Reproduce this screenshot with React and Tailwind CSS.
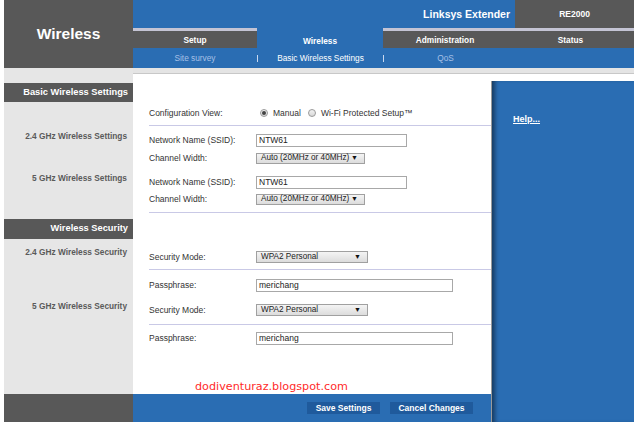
const BLUE = "bg-[#2a6db3]";

function Input({ w, value }) {
  return (
    <div
      className="h-full border border-[#a8a8a8] bg-white flex items-center pl-[2px] text-[8.5px] text-[#222]"
      style={{ width: w }}
    >
      {value}
    </div>
  );
}

function Select({ w, value }) {
  return (
    <div
      className="h-full border border-[#a0a0a0] bg-gradient-to-b from-[#f4f4f4] to-[#dcdcdc] flex items-center justify-between pl-[4px] pr-[6px] text-[8.2px] text-[#222]"
      style={{ width: w }}
    >
      <span>{value}</span>
      <span className="text-[7px] text-[#111]">▼</span>
    </div>
  );
}

function Row({ label, children, cls }) {
  return (
    <div className={"shrink-0 flex items-center pl-[16px] " + cls}>
      <div className="w-[107px] text-[8.5px] text-[#333] leading-none">{label}</div>
      <div className="h-full flex items-center">{children}</div>
    </div>
  );
}

function Line({ cls }) {
  return <div className={"shrink-0 ml-[16px] h-px bg-[#c9c9e6] " + cls} />;
}

function Radio({ on }) {
  return (
    <div className="w-[8px] h-[8px] rounded-full border border-[#9a9a9a] bg-gradient-to-b from-[#f2f2f2] to-[#d8d8d8] flex items-center justify-center">
      {on && <div className="w-[4px] h-[4px] rounded-full bg-[#444]" />}
    </div>
  );
}

export default function App() {
  return (
    <div className="w-[640px] h-[424px] bg-white pl-[4px] overflow-hidden font-['Liberation_Sans',Arial,sans-serif]">
      {/* Header */}
      <div className="w-[630px] h-[68px] flex">
        <div className="w-[129px] bg-[#585858] flex items-center justify-center text-white font-bold text-[15.5px]">
          Wireless
        </div>
        <div className="flex-1 flex flex-col">
          <div className="h-[28px] flex">
            <div className={"flex-1 flex items-center justify-end pr-[5px] pt-[1px] text-white font-bold text-[10.5px] " + BLUE}>
              Linksys Extender
            </div>
            <div className="w-[119px] bg-[#585858] flex items-center justify-center text-white font-bold text-[8.5px]">
              RE2000
            </div>
          </div>
          <div className="h-[20px] flex text-white font-bold text-[8.3px]">
            <div className="w-[124px] bg-[#585858] border-t-[3px] border-[#c4c4d4] flex items-center justify-center pt-[1px]">
              Setup
            </div>
            <div className={"w-[126px] flex items-center justify-center pt-[6px] " + BLUE}>Wireless</div>
            <div className="w-[124px] bg-[#585858] border-t-[3px] border-[#c4c4d4] flex items-center justify-center pt-[1px]">
              Administration
            </div>
            <div className="w-[127px] bg-[#585858] border-t-[3px] border-[#c4c4d4] flex items-center justify-center pt-[1px]">
              Status
            </div>
          </div>
          <div className={"h-[20px] flex items-center text-[8.3px] " + BLUE}>
            <div className="w-[124px] text-center text-[#a6c0e6]">Site survey</div>
            <div className="w-px h-[7px] bg-[#c8d8f0]" />
            <div className="w-[125px] text-center text-white">Basic Wireless Settings</div>
            <div className="w-px h-[7px] bg-[#c8d8f0]" />
            <div className="w-[123px] text-center text-[#a6c0e6]">QoS</div>
          </div>
        </div>
      </div>

      {/* Body */}
      <div className="flex">
        <div className="w-[487px] flex flex-col">
          <div className="h-[326px] flex">
            {/* Sidebar */}
            <div className="w-[129px] bg-[#e6e6e6] flex flex-col">
              <div className="mt-[15px] h-[19px] bg-[#585858] flex items-center justify-end pr-[5px] text-white font-bold text-[9.3px]">
                Basic Wireless Settings
              </div>
              <div className="mt-[29px] h-[10px] flex items-center justify-end pr-[6px] text-[#5a5a5a] font-bold text-[8.3px]">
                2.4 GHz Wireless Settings
              </div>
              <div className="mt-[32px] h-[10px] flex items-center justify-end pr-[6px] text-[#5a5a5a] font-bold text-[8.3px]">
                5 GHz Wireless Settings
              </div>
              <div className="mt-[36px] h-[20px] bg-[#585858] flex items-center justify-end pr-[5px] text-white font-bold text-[9.3px]">
                Wireless Security
              </div>
              <div className="mt-[8px] h-[10px] flex items-center justify-end pr-[6px] text-[#5a5a5a] font-bold text-[8.3px]">
                2.4 GHz Wireless Security
              </div>
              <div className="mt-[44px] h-[10px] flex items-center justify-end pr-[6px] text-[#5a5a5a] font-bold text-[8.3px]">
                5 GHz Wireless Security
              </div>
            </div>
            {/* Main */}
            <div className="w-[358px] flex flex-col">
              <div className="shrink-0 h-[6px] bg-[#e4e4e4] border-b border-[#c8c8c8]" />
              <div className="flex-1 bg-white flex flex-col overflow-hidden">
                <Row label="Configuration View:" cls="mt-[32px] h-[14px]">
                  <div className="ml-[4px] flex items-center text-[8.5px] text-[#333]">
                    <Radio on />
                    <span className="ml-[5px]">Manual</span>
                    <span className="ml-[7px]"><Radio /></span>
                    <span className="ml-[5px]">Wi-Fi Protected Setup™</span>
                  </div>
                </Row>
                <Line cls="mt-[5px]" />
                <Row label="Network Name (SSID):" cls="mt-[8px] h-[13px]">
                  <Input w={151} value="NTW61" />
                </Row>
                <Row label="Channel Width:" cls="mt-[6px] h-[11px]">
                  <Select w={109} value="Auto (20MHz or 40MHz)" />
                </Row>
                <Row label="Network Name (SSID):" cls="mt-[12px] h-[13px]">
                  <Input w={151} value="NTW61" />
                </Row>
                <Row label="Channel Width:" cls="mt-[5px] h-[11px]">
                  <Select w={109} value="Auto (20MHz or 40MHz)" />
                </Row>
                <Line cls="mt-[7px]" />
                <Row label="Security Mode:" cls="mt-[38px] h-[12px]">
                  <Select w={112} value="WPA2 Personal" />
                </Row>
                <Line cls="mt-[6px]" />
                <Row label="Passphrase:" cls="mt-[9px] h-[13px]">
                  <Input w={197} value="merichang" />
                </Row>
                <Row label="Security Mode:" cls="mt-[12px] h-[12px]">
                  <Select w={112} value="WPA2 Personal" />
                </Row>
                <Line cls="mt-[8px]" />
                <Row label="Passphrase:" cls="mt-[7px] h-[13px]">
                  <Input w={197} value="merichang" />
                </Row>
                <div className="shrink-0 mt-[36px] ml-[62px] h-[12px] leading-[12px] text-[11.2px] text-[#ff2a2a] font-['DejaVu_Sans',sans-serif]">
                  dodiventuraz.blogspot.com
                </div>
              </div>
            </div>
          </div>
          {/* Footer */}
          <div className="h-[28px] flex">
            <div className="w-[129px] bg-[#585858]" />
            <div className={"flex-1 flex justify-end items-start pt-[8px] pr-[18px] gap-[10px] " + BLUE}>
              <div className="w-[73px] h-[12px] bg-[#1f5a9c] flex items-center justify-center text-white font-bold text-[8.5px]">
                Save Settings
              </div>
              <div className="w-[83px] h-[12px] bg-[#1f5a9c] flex items-center justify-center text-white font-bold text-[8.5px]">
                Cancel Changes
              </div>
            </div>
          </div>
        </div>
        {/* Right help column */}
        <div className="w-[143px] h-[354px] flex flex-col">
          <div className="h-[6px] bg-[#e4e4e4] border-b border-[#c8c8c8]" />
          <div className="h-[7px] bg-white" />
          <div className={"flex-1 border-l border-[#9a9a9a] shadow-[inset_5px_0_4px_-2px_rgba(0,0,0,0.45)] pl-[21px] pt-[24px] " + BLUE}>
            <span className="text-white font-bold text-[9px] underline">Help...</span>
          </div>
        </div>
      </div>
    </div>
  );
}
